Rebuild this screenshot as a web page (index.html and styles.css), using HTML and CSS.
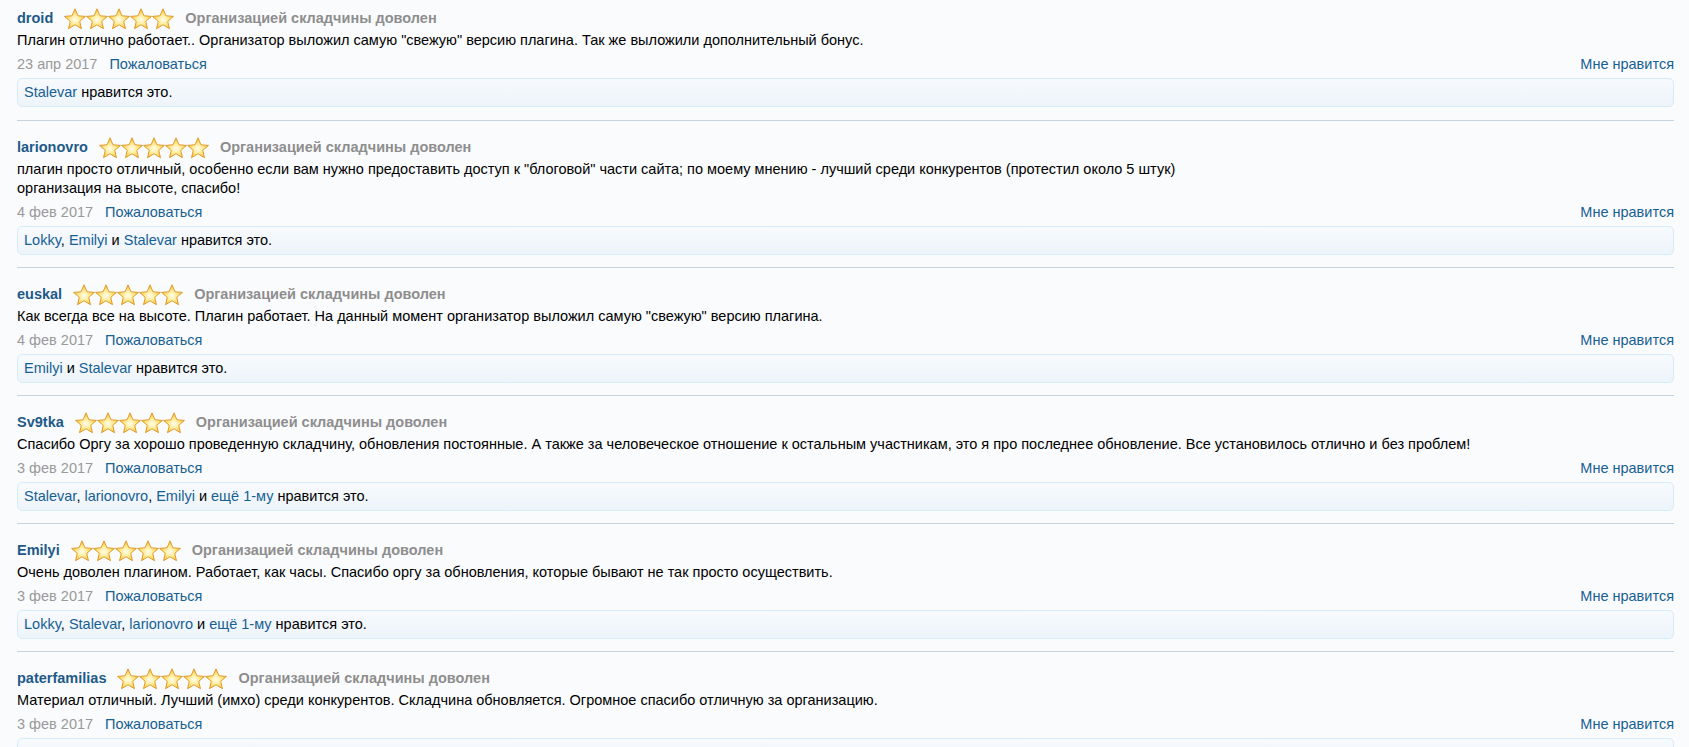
FILE: index.html
```html
<!DOCTYPE html>
<html lang="ru">
<head>
<meta charset="utf-8">
<title>Отзывы</title>
<link rel="stylesheet" href="styles.css">
</head>
<body>
<svg class="defs" width="0" height="0" aria-hidden="true">
  <defs>
    <radialGradient id="starFill" cx="50%" cy="55%" r="58%">
      <stop offset="0" stop-color="#fffdf0"/>
      <stop offset="0.4" stop-color="#ffec9a"/>
      <stop offset="0.8" stop-color="#f8c845"/>
      <stop offset="1" stop-color="#eeaa25"/>
    </radialGradient>
    <path id="star" d="M11 0.8 L13.94 7.75 L21.46 8.4 L15.76 13.35 L17.47 20.7 L11 16.8 L4.53 20.7 L6.24 13.35 L0.54 8.4 L8.06 7.75 Z" fill="url(#starFill)" stroke="#dc9422" stroke-width="0.9" stroke-linejoin="round"/>
  </defs>
</svg>

<div class="list">

  <div class="entry">
    <div class="head">
      <a class="name" href="#">droid</a>
      <svg class="rating" viewBox="0 0 110 22"><use href="#star" x="0"/><use href="#star" x="22"/><use href="#star" x="44"/><use href="#star" x="66"/><use href="#star" x="88"/></svg>
      <span class="verdict">Организацией складчины доволен</span>
    </div>
    <div class="text">Плагин отлично работает.. Организатор выложил самую "свежую" версию плагина. Так же выложили дополнительный бонус.</div>
    <div class="meta"><span class="date">23 апр 2017</span><a class="report" href="#">Пожаловаться</a><a class="like" href="#">Мне нравится</a></div>
    <div class="likes"><a href="#">Stalevar</a> нравится это.</div>
  </div>

  <div class="entry">
    <div class="head">
      <a class="name" href="#">larionovro</a>
      <svg class="rating" viewBox="0 0 110 22"><use href="#star" x="0"/><use href="#star" x="22"/><use href="#star" x="44"/><use href="#star" x="66"/><use href="#star" x="88"/></svg>
      <span class="verdict">Организацией складчины доволен</span>
    </div>
    <div class="text">плагин просто отличный, особенно если вам нужно предоставить доступ к "блоговой" части сайта; по моему мнению - лучший среди конкурентов (протестил около 5 штук)<br>организация на высоте, спасибо!</div>
    <div class="meta"><span class="date">4 фев 2017</span><a class="report" href="#">Пожаловаться</a><a class="like" href="#">Мне нравится</a></div>
    <div class="likes"><a href="#">Lokky</a>, <a href="#">Emilyi</a> и <a href="#">Stalevar</a> нравится это.</div>
  </div>

  <div class="entry">
    <div class="head">
      <a class="name" href="#">euskal</a>
      <svg class="rating" viewBox="0 0 110 22"><use href="#star" x="0"/><use href="#star" x="22"/><use href="#star" x="44"/><use href="#star" x="66"/><use href="#star" x="88"/></svg>
      <span class="verdict">Организацией складчины доволен</span>
    </div>
    <div class="text">Как всегда все на высоте. Плагин работает. На данный момент организатор выложил самую "свежую" версию плагина.</div>
    <div class="meta"><span class="date">4 фев 2017</span><a class="report" href="#">Пожаловаться</a><a class="like" href="#">Мне нравится</a></div>
    <div class="likes"><a href="#">Emilyi</a> и <a href="#">Stalevar</a> нравится это.</div>
  </div>

  <div class="entry">
    <div class="head">
      <a class="name" href="#">Sv9tka</a>
      <svg class="rating" viewBox="0 0 110 22"><use href="#star" x="0"/><use href="#star" x="22"/><use href="#star" x="44"/><use href="#star" x="66"/><use href="#star" x="88"/></svg>
      <span class="verdict">Организацией складчины доволен</span>
    </div>
    <div class="text">Спасибо Оргу за хорошо проведенную складчину, обновления постоянные. А также за человеческое отношение к остальным участникам, это я про последнее обновление. Все установилось отлично и без проблем!</div>
    <div class="meta"><span class="date">3 фев 2017</span><a class="report" href="#">Пожаловаться</a><a class="like" href="#">Мне нравится</a></div>
    <div class="likes"><a href="#">Stalevar</a>, <a href="#">larionovro</a>, <a href="#">Emilyi</a> и <a href="#">ещё 1-му</a> нравится это.</div>
  </div>

  <div class="entry">
    <div class="head">
      <a class="name" href="#">Emilyi</a>
      <svg class="rating" viewBox="0 0 110 22"><use href="#star" x="0"/><use href="#star" x="22"/><use href="#star" x="44"/><use href="#star" x="66"/><use href="#star" x="88"/></svg>
      <span class="verdict">Организацией складчины доволен</span>
    </div>
    <div class="text">Очень доволен плагином. Работает, как часы. Спасибо оргу за обновления, которые бывают не так просто осуществить.</div>
    <div class="meta"><span class="date">3 фев 2017</span><a class="report" href="#">Пожаловаться</a><a class="like" href="#">Мне нравится</a></div>
    <div class="likes"><a href="#">Lokky</a>, <a href="#">Stalevar</a>, <a href="#">larionovro</a> и <a href="#">ещё 1-му</a> нравится это.</div>
  </div>

  <div class="entry">
    <div class="head">
      <a class="name" href="#">paterfamilias</a>
      <svg class="rating" viewBox="0 0 110 22"><use href="#star" x="0"/><use href="#star" x="22"/><use href="#star" x="44"/><use href="#star" x="66"/><use href="#star" x="88"/></svg>
      <span class="verdict">Организацией складчины доволен</span>
    </div>
    <div class="text">Материал отличный. Лучший (имхо) среди конкурентов. Складчина обновляется. Огромное спасибо отличную за организацию.</div>
    <div class="meta"><span class="date">3 фев 2017</span><a class="report" href="#">Пожаловаться</a><a class="like" href="#">Мне нравится</a></div>
    <div class="likes likes-empty"></div>
  </div>

</div>
</body>
</html>
```

FILE: styles.css
```css
html, body {
  margin: 0;
  padding: 0;
}

body {
  background: #fafbfd;
  color: #000;
  font-family: "Liberation Sans", Arial, sans-serif;
  font-size: 14.5px;
  line-height: 19.5px;
}

.defs {
  display: block;
  width: 0;
  height: 0;
  overflow: hidden;
}

a {
  color: #176093;
  text-decoration: none;
}

.list {
  margin: 0 15px 0 17px;
  padding-top: 7px;
}

.entry {
  padding: 15px 0 12.5px;
  border-bottom: 1px solid #c4d4e0;
}

.entry:first-child {
  padding-top: 0;
  padding-bottom: 13px;
}

.head {
  display: flex;
  align-items: center;
  height: 24px;
}

.name {
  font-weight: bold;
  color: #1d5a88;
  margin-right: 11px;
}

.rating {
  width: 110px;
  height: 22px;
  margin-right: 11px;
  flex: none;
}

.verdict {
  font-weight: bold;
  color: #8e8e8e;
}

.text {
  line-height: 19.5px;
}

.meta {
  display: flex;
  margin-top: 4.5px;
  line-height: 19px;
}

.date {
  color: #999;
}

.report {
  margin-left: 12px;
}

.like {
  margin-left: auto;
}

.likes {
  margin-top: 3.5px;
  padding: 4px 6px;
  line-height: 19px;
  border: 1px solid #d6ebfa;
  border-radius: 5px;
  background: linear-gradient(to bottom, #f7fafd, #edf4fa);
}

.likes-empty {
  min-height: 19px;
}
```
